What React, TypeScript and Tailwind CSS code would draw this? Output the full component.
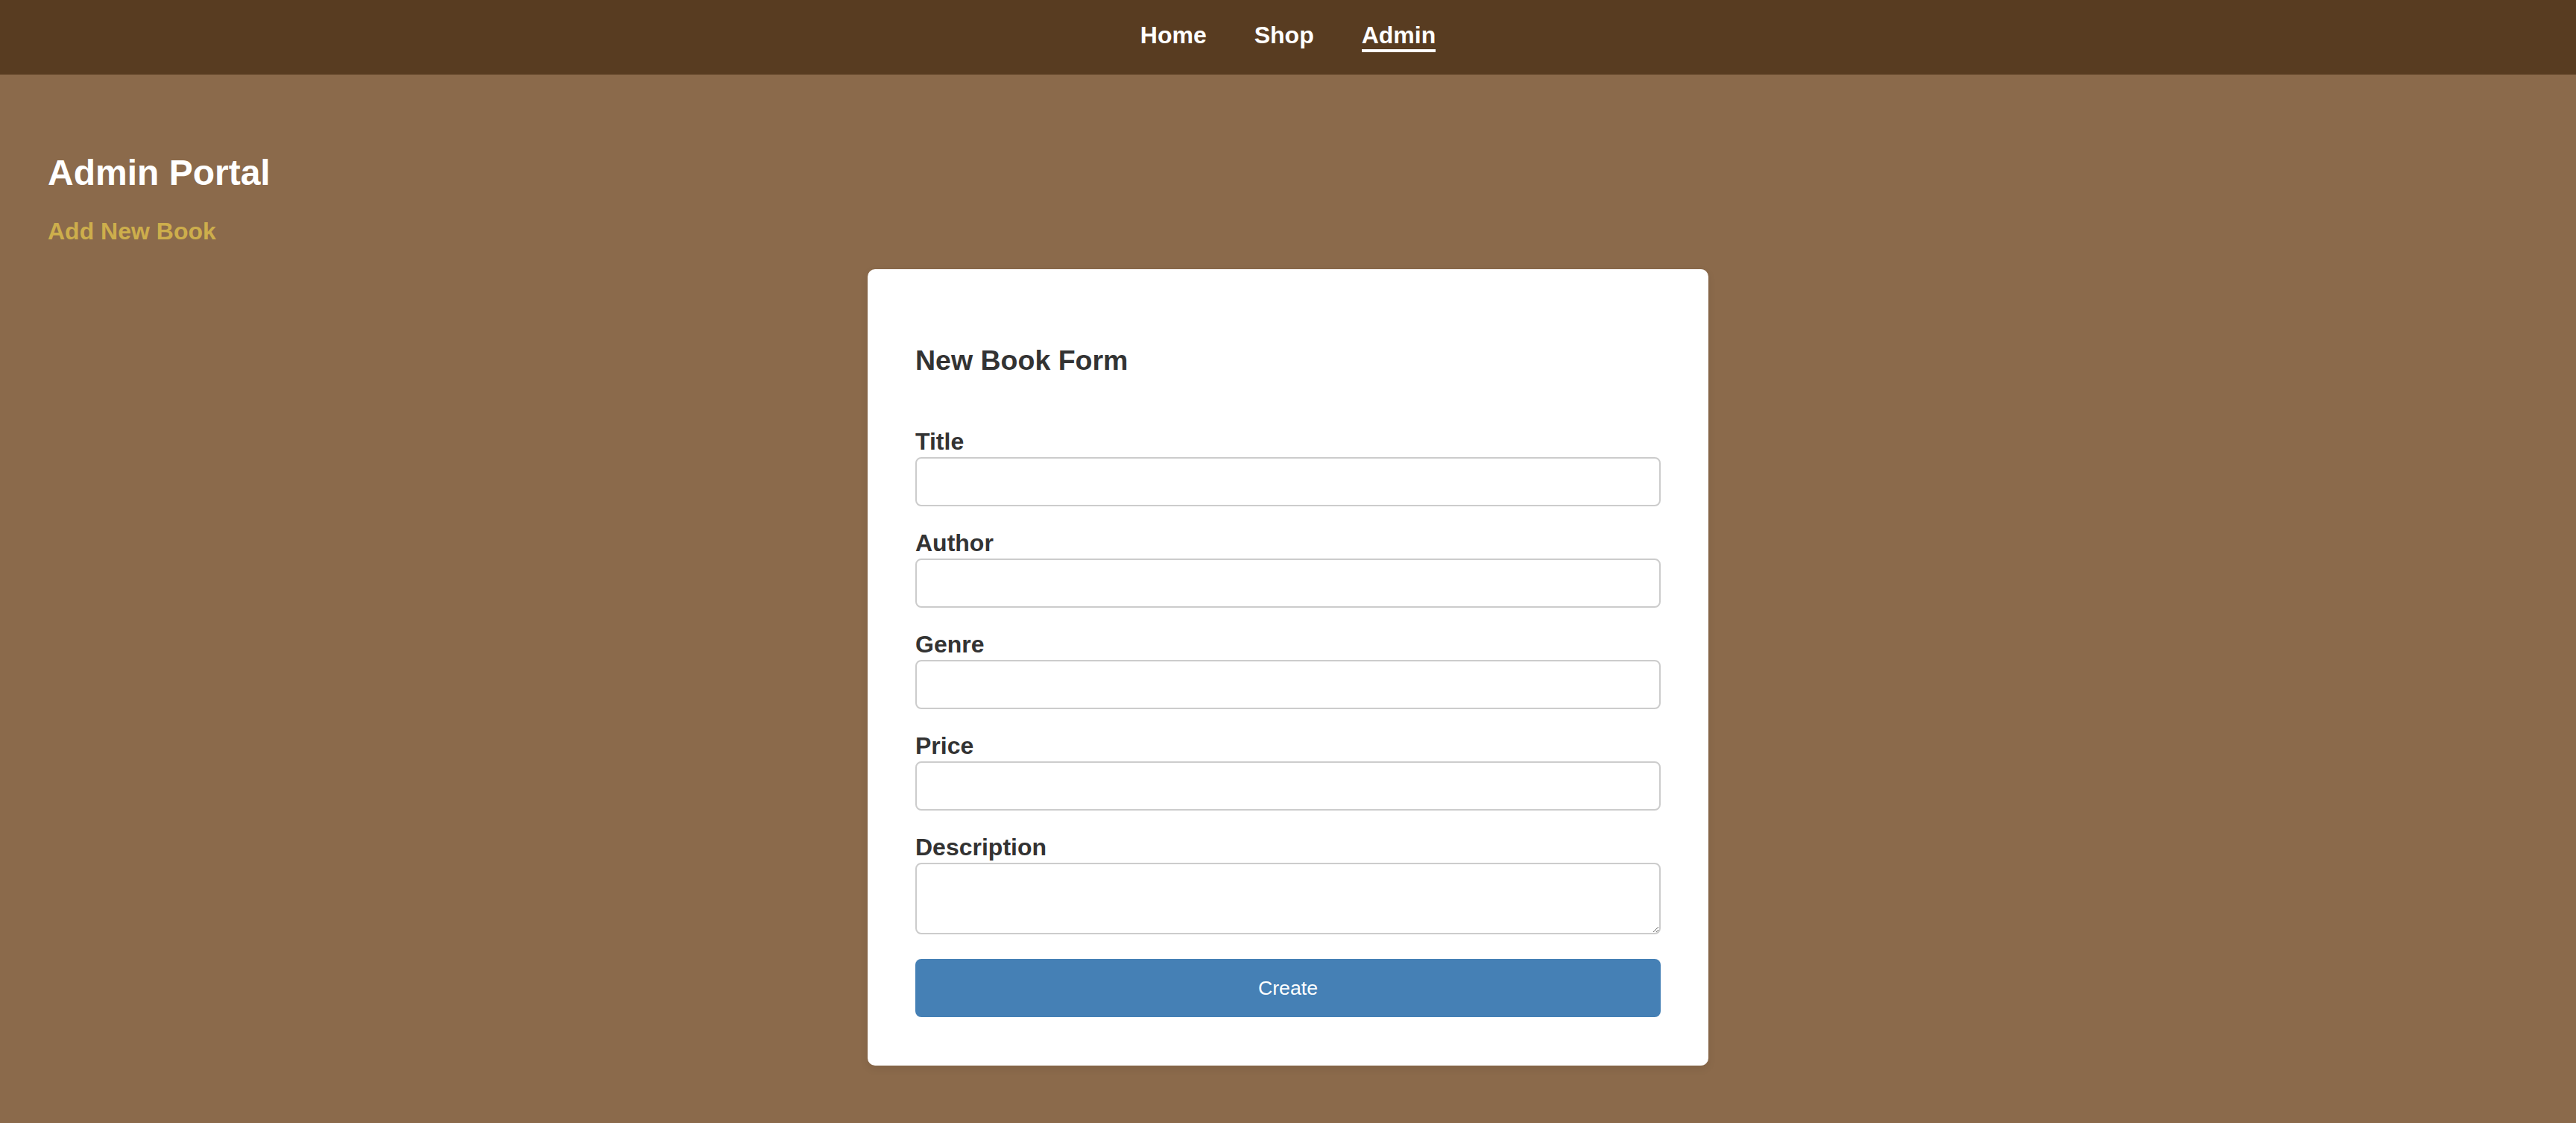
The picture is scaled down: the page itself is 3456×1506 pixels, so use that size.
import React from 'react'

const fields = ['Title', 'Author', 'Genre', 'Price']

const App = () => {
  return (
    <div className="min-h-screen bg-[#8b6a4b] font-['Liberation_Sans',Arial,sans-serif]">
      <nav className="h-[100px] bg-[#583c21] flex items-start justify-center gap-[64px] pt-[29px]">
        <a className="text-white text-[32px] leading-[37px] font-bold border-b-4 border-transparent" href="#">Home</a>
        <a className="text-white text-[32px] leading-[37px] font-bold border-b-4 border-transparent" href="#">Shop</a>
        <a className="text-white text-[32px] leading-[37px] font-bold border-b-4 border-white" href="#">Admin</a>
      </nav>

      <div className="px-[64px] pt-[104px]">
        <h2 className="text-white text-[48px] leading-[55px] font-bold">Admin Portal</h2>
        <a className="block mt-[33px] text-[#cdae4c] text-[32px] leading-[37px] font-bold" href="#">Add New Book</a>
      </div>

      <div className="mt-[32px] mx-auto w-[1128px] bg-white rounded-[10px] shadow-[0_4px_12px_rgba(0,0,0,0.08)] pt-[101px] px-[64px] pb-[65px]">
        <h3 className="text-[#333] text-[37.5px] leading-[43px] font-bold">New Book Form</h3>
        <form className="mt-[69px]" onSubmit={(e) => e.preventDefault()}>
          {fields.map((f) => (
            <div key={f} className="mb-[31px]">
              <label className="block text-[#333] text-[32px] leading-[37px] font-bold mb-[2px]">{f}</label>
              <input className="block w-full h-[66px] border-2 border-[#ccc] rounded-[8px] px-[16px] text-[26.67px] bg-white" type="text" />
            </div>
          ))}
          <div>
            <label className="block text-[#333] text-[32px] leading-[37px] font-bold mb-[2px]">Description</label>
            <textarea className="block w-full h-[96px] border-2 border-[#ccc] rounded-[8px] px-[16px] py-[16px] text-[26.67px] bg-white" rows={2}></textarea>
          </div>
          <button className="block w-full mt-[33px] h-[78px] bg-[#4580b5] text-white text-[26.67px] rounded-[8px]" type="submit">Create</button>
        </form>
      </div>
    </div>
  )
}

export default App
